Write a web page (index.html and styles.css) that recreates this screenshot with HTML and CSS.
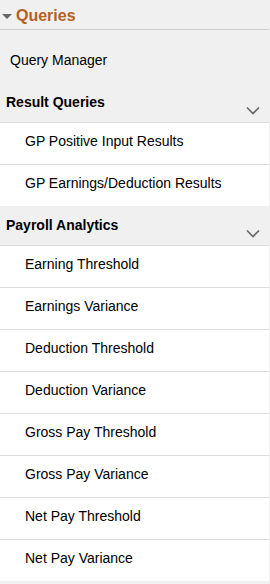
FILE: index.html
```html
<!DOCTYPE html>
<html lang="en">
<head>
  <meta charset="UTF-8">
  <meta name="viewport" content="width=device-width, initial-scale=1.0">
  <title>Queries</title>
  <link rel="stylesheet" href="styles.css">
</head>
<body>
  <div class="panel">
    <!-- Panel title -->
    <div class="panel-title">
      <span class="caret"></span>
      <span>Queries</span>
    </div>

    <div class="plain-link">Query Manager</div>

    <!-- Result Queries group -->
    <div class="group-head">
      <span>Result Queries</span>
      <svg class="chevron" width="14" height="9" viewBox="0 0 14 9"><path d="M1 1.5 L7 7.5 L13 1.5" fill="none" stroke="#666" stroke-width="1.6"/></svg>
    </div>
    <ul class="group-list">
      <li>GP Positive Input Results</li>
      <li>GP Earnings/Deduction Results</li>
    </ul>

    <!-- Payroll Analytics group -->
    <div class="group-head">
      <span>Payroll Analytics</span>
      <svg class="chevron" width="14" height="9" viewBox="0 0 14 9"><path d="M1 1.5 L7 7.5 L13 1.5" fill="none" stroke="#666" stroke-width="1.6"/></svg>
    </div>
    <ul class="group-list">
      <li>Earning Threshold</li>
      <li>Earnings Variance</li>
      <li>Deduction Threshold</li>
      <li>Deduction Variance</li>
      <li>Gross Pay Threshold</li>
      <li>Gross Pay Variance</li>
      <li>Net Pay Threshold</li>
      <li>Net Pay Variance</li>
    </ul>
  </div>
</body>
</html>
```

FILE: styles.css
```css
/* Page */
body {
  margin: 0;
  background-color: #f0f0f0;
  font-family: "Liberation Sans", Arial, sans-serif;
  font-size: 14px;
  line-height: 16px;
  color: #000;
}

.panel {
  width: 269px;
}

/* Title bar */
.panel-title {
  display: flex;
  align-items: center;
  gap: 4px;
  height: 26px;
  padding: 3px 0 0 2px;
  border-bottom: 1px solid #cccccc;
  color: #b4621e;
  font-size: 16px;
  font-weight: bold;
}

.caret {
  width: 0;
  height: 0;
  border-left: 5px solid transparent;
  border-right: 5px solid transparent;
  border-top: 5px solid #666;
  margin-top: 1px;
}

.plain-link {
  padding: 22px 10px 15px;
}

/* Group headers */
.group-head {
  display: flex;
  justify-content: space-between;
  align-items: flex-end;
  height: 16px;
  padding: 11px 9px 12px 6px;
  font-weight: bold;
}

.chevron {
  margin-bottom: -5px;
}

/* Group item list */
.group-list {
  list-style: none;
  margin: 0;
  padding: 0;
  background-color: #fff;
}

.group-list li {
  padding: 10px 10px 15px 25px;
  border-top: 1px solid #dddddd;
}
```
